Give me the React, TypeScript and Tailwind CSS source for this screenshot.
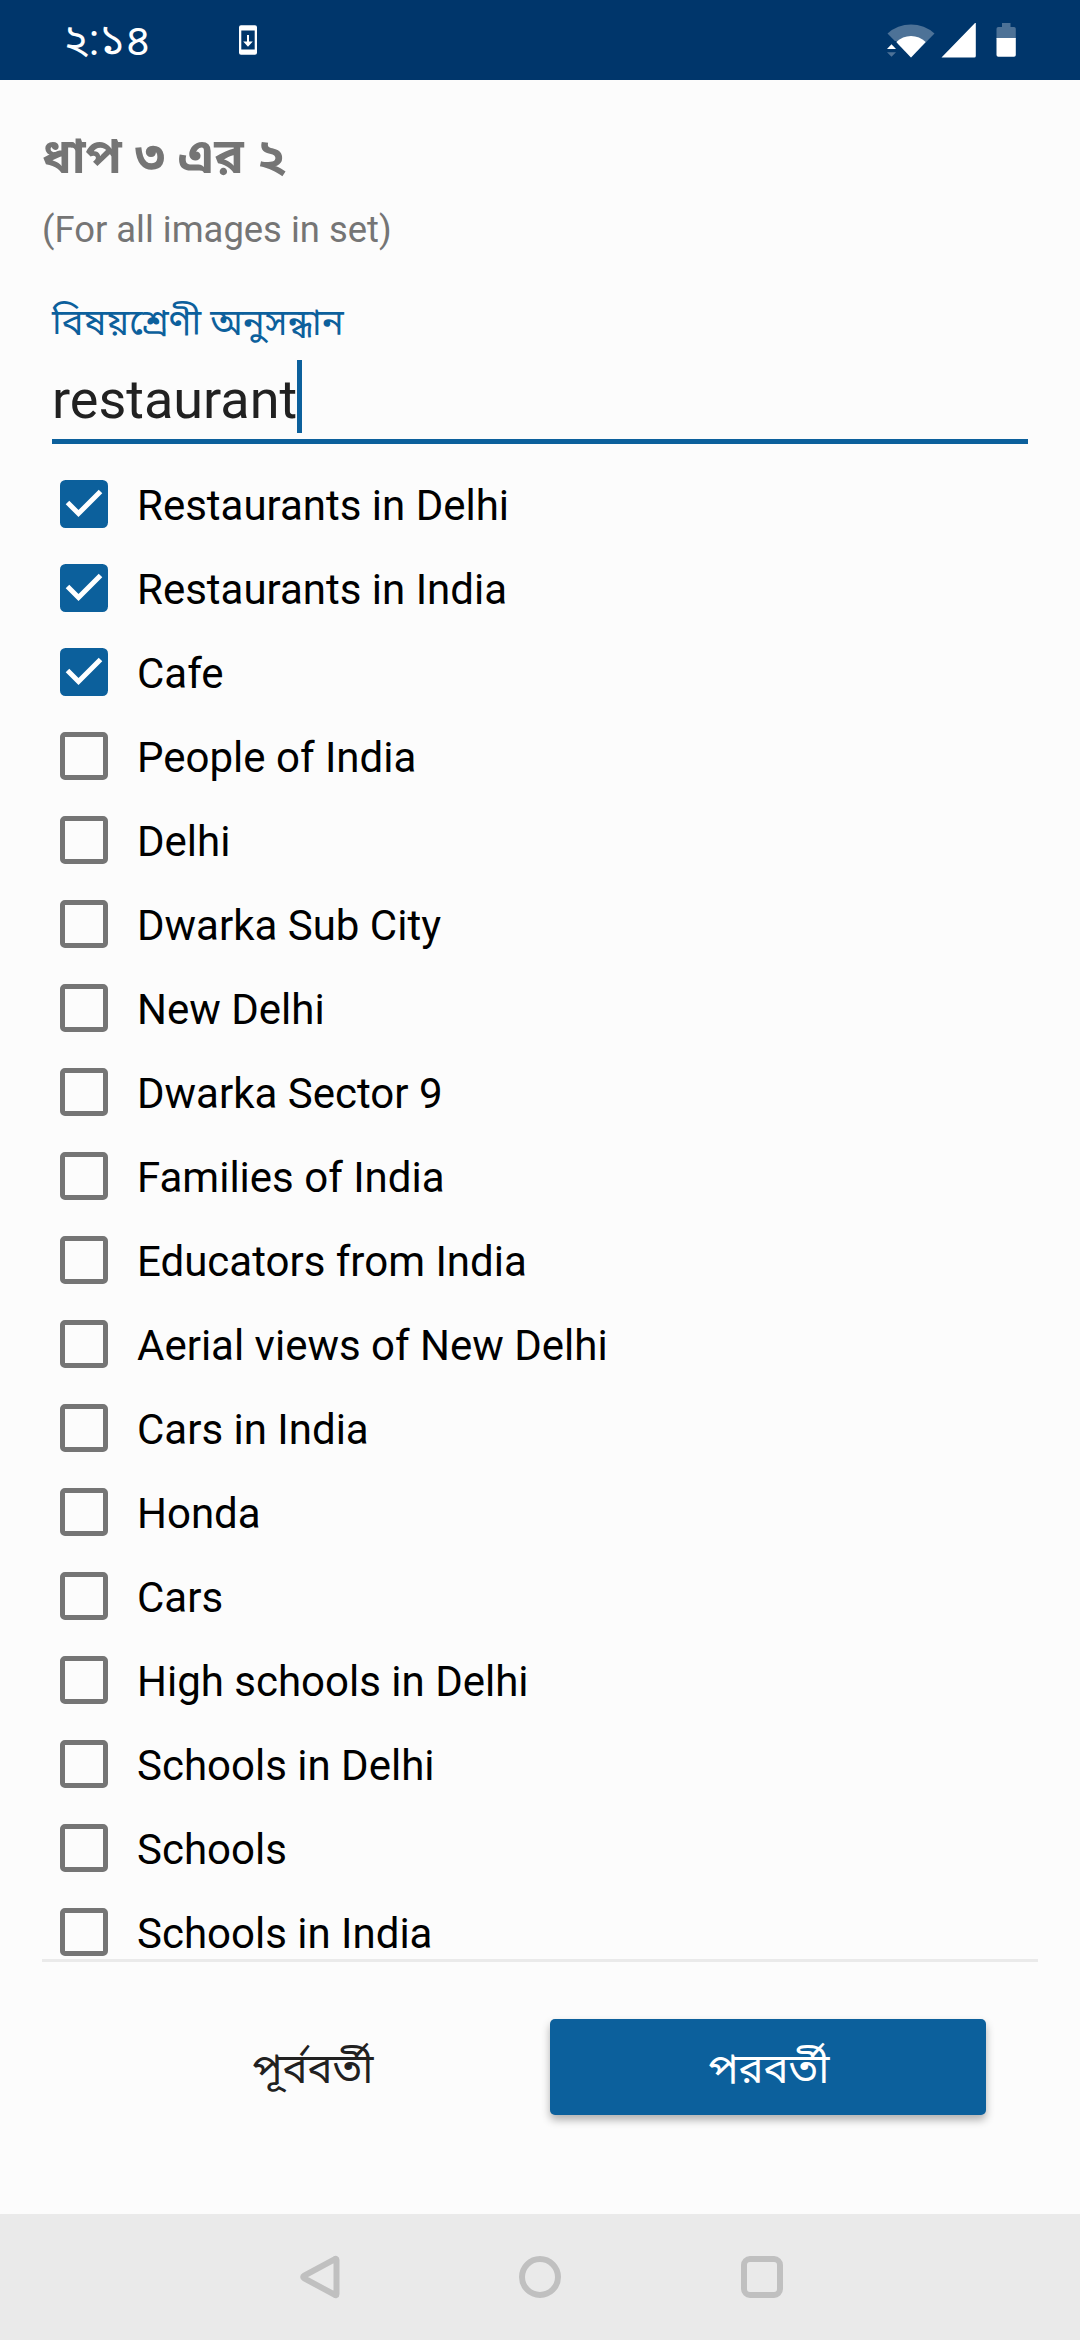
const categories = [
  { name: "Restaurants in Delhi", checked: true },
  { name: "Restaurants in India", checked: true },
  { name: "Cafe", checked: true },
  { name: "People of India", checked: false },
  { name: "Delhi", checked: false },
  { name: "Dwarka Sub City", checked: false },
  { name: "New Delhi", checked: false },
  { name: "Dwarka Sector 9", checked: false },
  { name: "Families of India", checked: false },
  { name: "Educators from India", checked: false },
  { name: "Aerial views of New Delhi", checked: false },
  { name: "Cars in India", checked: false },
  { name: "Honda", checked: false },
  { name: "Cars", checked: false },
  { name: "High schools in Delhi", checked: false },
  { name: "Schools in Delhi", checked: false },
  { name: "Schools", checked: false },
  { name: "Schools in India", checked: false },
];

function StatusBar() {
  return (
    <header className="flex h-20 shrink-0 items-center bg-[#00366b] text-white">
      <span className="ml-[63px] w-[112px] whitespace-nowrap pt-[2px] text-[43.5px] leading-[56px]">২:১৪</span>
      <svg className="ml-[63px] h-[30px] w-5" viewBox="0 0 20 30">
        <path
          fill="#fff"
          fillRule="evenodd"
          d="M3 0.3h14a2 2 0 0 1 2 2v25.4a2 2 0 0 1-2 2H3a2 2 0 0 1-2-2V2.3a2 2 0 0 1 2-2zM3.3 5.5v19h13.4v-19zM9 10h2v6.5h3.8L10 21.7 5.200 16.500H9z"
        />
      </svg>
      <div className="ml-auto mr-[64px] flex h-[36px] items-start">
        <svg className="h-[36px] w-[48px]" viewBox="0 0 48 36">
          <path fill="#4d7297" d="M0.500 11.500A35 35 0 0 1 47.500 11.500L24 35.500z" />
          <path fill="#00366b" d="M0 19h9.500l6.500 17H0z" />
          <path fill="#fff" d="M9.300 20A21 21 0 0 1 38.700 20L24 35.500z" />
          <path fill="#fff" d="M0 27L4.500 22.300 9 27z" />
          <path fill="#4d7297" d="M0 30.200h9L4.500 34.800z" />
        </svg>
        <svg className="ml-1.5 h-[36px] w-[35px]" viewBox="0 0 35 36">
          <path fill="#fff" d="M0.500 35.500L34 1h0.800v33a1.500 1.500 0 0 1-1.500 1.500z" />
        </svg>
        <svg className="ml-5 h-[36px] w-5" viewBox="0 0 20 36">
          <path fill="#4d7297" d="M6 1h8.500v4H18a1.800 1.800 0 0 1 1.800 1.800V17H0.500V6.800A1.800 1.800 0 0 1 2.300 5H6z" />
          <path fill="#fff" d="M0.500 16h19.300v17a1.800 1.800 0 0 1-1.800 1.800H2.300A1.800 1.800 0 0 1 0.500 33z" />
        </svg>
      </div>
    </header>
  );
}

function CategoryRow({ name, checked }: { name: string; checked: boolean }) {
  return (
    <label className="flex h-[84px] shrink-0 items-center pl-[18px]">
      {checked ? (
        <svg className="size-12" viewBox="0 0 48 48">
          <rect width="48" height="48" rx="5.500" fill="#0c609c" />
          <path d="M7.500 22.500L18.500 33.500 40.500 11.500" fill="none" stroke="#fff" strokeWidth="5" />
        </svg>
      ) : (
        <span className="size-12 rounded-[5px] border-[5px] border-[#757575]" />
      )}
      <span className="ml-[29px] whitespace-nowrap pt-[3px] text-[42px] leading-[50px] text-black">{name}</span>
    </label>
  );
}

export default function App() {
  return (
    <div className="flex h-[2340px] w-[1080px] flex-col overflow-hidden bg-[#fcfcfc] font-[Roboto,'Noto_Sans_Bengali','Noto_Sans',sans-serif]">
      <StatusBar />
      <main className="flex min-h-0 flex-1 flex-col px-[42px]">
        <h1 className="mt-[46px] h-[62px] whitespace-nowrap text-[49px] font-bold leading-[62px] text-[#757575] [word-spacing:1px]">ধাপ ৩ এর ২</h1>
        <p className="mt-[18px] h-12 whitespace-nowrap text-[36.4px] leading-[48px] text-[#757575]">(For all images in set)</p>
        <section className="flex flex-col px-[10px]">
          <div className="mt-[40px] h-[56px] whitespace-nowrap pt-px text-[36.5px] leading-[56px] text-[#0c609c]">বিষয়শ্রেণী অনুসন্ধান</div>
          <div className="mt-[10px] flex h-[84px] items-start border-b-[5.5px] border-[#0c609c]">
            <span className="whitespace-nowrap text-[54px] leading-[80px] text-[#212121]">restaurant</span>
            <span className="h-[73px] w-[5px] bg-[#0c609c]" />
          </div>
        </section>
        <div className="mt-[18px] flex h-[1497px] shrink-0 flex-col overflow-hidden">
          {categories.map((category) => (
            <CategoryRow key={category.name} {...category} />
          ))}
        </div>
        <div className="h-[3px] shrink-0 bg-[#eaeaea]" />
        <div className="mt-[57px] flex h-24 shrink-0 pr-[52px]">
          <button className="ml-[52px] w-[436px] pl-[2px] pt-[4px] text-[42px] leading-[56px] text-[#212121]">পূর্ববর্তী</button>
          <button className="ml-[20px] w-[436px] rounded-[5px] bg-[#0c609c] pl-[2px] pt-[4px] text-[42px] leading-[56px] text-white shadow-[0_5px_8px_rgba(0,0,0,0.3)]">
            পরবর্তী
          </button>
        </div>
      </main>
      <nav className="flex h-[126px] shrink-0 items-center justify-center gap-[180px] bg-[#eaeaea]">
        <svg className="size-[42px] overflow-visible" viewBox="-3 0 42 42" fill="none" stroke="#c0c0c0" strokeWidth="6" strokeLinejoin="round">
          <path d="M36.500 4V38Q36.500 40 34.500 38.700L4.300 22.300Q2 21 4.300 19.700L34.500 3.300Q36.500 2 36.500 4z" />
        </svg>
        <svg className="size-[42px]" viewBox="0 0 42 42" fill="none" stroke="#c0c0c0" strokeWidth="6">
          <circle cx="21" cy="21" r="18" />
        </svg>
        <svg className="size-[42px]" viewBox="0 0 42 42" fill="none" stroke="#c0c0c0" strokeWidth="6">
          <rect x="3" y="3" width="36" height="36" rx="6" />
        </svg>
      </nav>
    </div>
  );
}
